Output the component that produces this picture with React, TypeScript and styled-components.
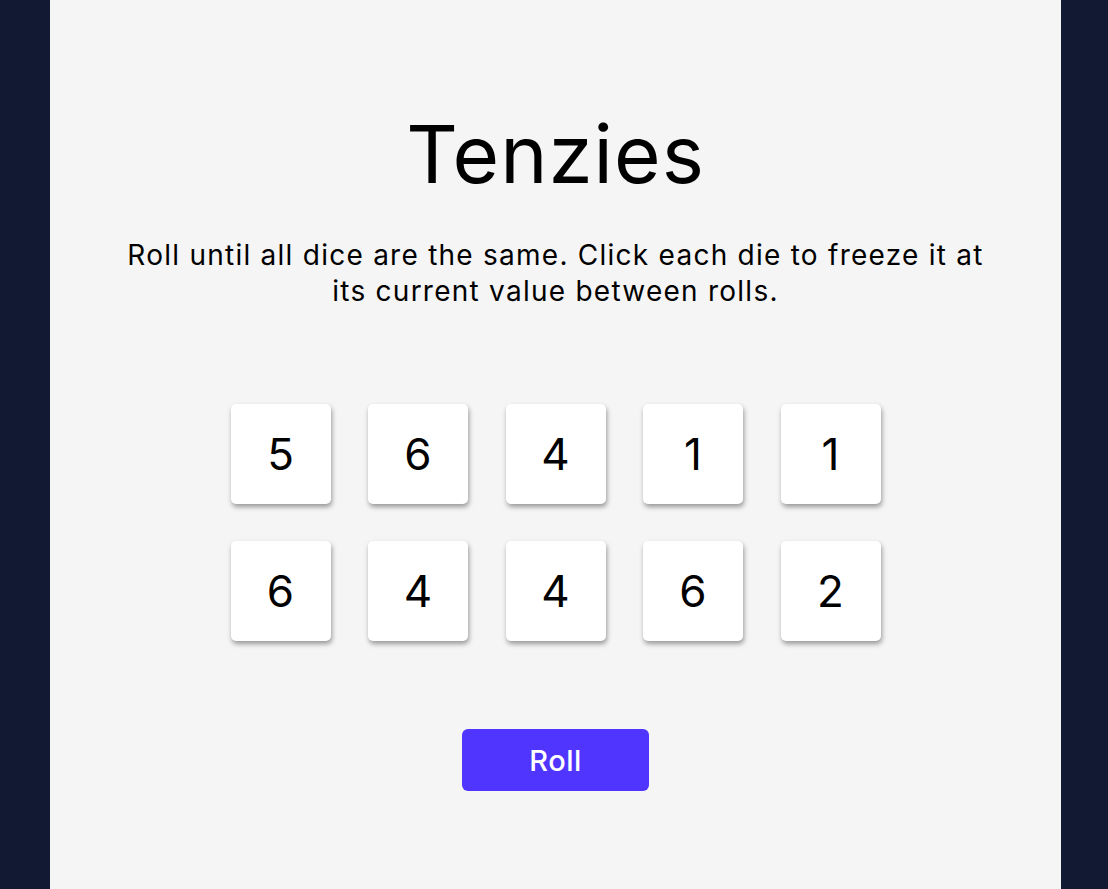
import React from "react";
import styled, { createGlobalStyle } from "styled-components";

const GlobalStyle = createGlobalStyle`
  html, body {
    margin: 0;
    padding: 0;
    background: #121a33;
    font-family: Inter, "Noto Sans", "Liberation Sans", sans-serif;
  }
  #root {
    min-height: 100vh;
  }
`;

const Page = styled.div`
  display: flex;
  min-height: 100vh;
  padding-left: 50px;
  box-sizing: border-box;
`;

const Board = styled.main`
  width: 1011px;
  min-height: 889px;
  background: #f5f5f5;
  display: flex;
  flex-direction: column;
  align-items: center;
  padding-top: 106px;
  box-sizing: border-box;
`;

const Title = styled.h1`
  margin: 0;
  font-size: 80px;
  line-height: 96px;
  font-weight: 400;
  letter-spacing: 1px;
  color: #000;
`;

const Instructions = styled.p`
  margin: 35px 0 0;
  width: 860px;
  text-align: center;
  font-size: 28px;
  line-height: 36px;
  letter-spacing: 1.25px;
  color: #000;
`;

const DiceGrid = styled.div`
  margin-top: 95px;
  display: grid;
  grid-template-columns: repeat(5, 100px);
  grid-auto-rows: 100px;
  column-gap: 37.5px;
  row-gap: 37px;
`;

const Die = styled.button`
  border: none;
  padding: 0;
  background: #fff;
  border-radius: 5px;
  box-shadow: 1px 3px 5px rgba(0, 0, 0, 0.38);
  display: flex;
  align-items: center;
  justify-content: center;
  font-family: inherit;
  font-size: 44px;
  font-weight: 400;
  color: #000;
  cursor: pointer;
`;

const RollButton = styled.button`
  margin-top: 88px;
  width: 187px;
  height: 62px;
  border: none;
  border-radius: 6px;
  background: #5035ff;
  color: #fff;
  font-family: inherit;
  font-size: 29px;
  font-weight: 500;
  letter-spacing: 0.5px;
  cursor: pointer;
`;

const dice = [5, 6, 4, 1, 1, 6, 4, 4, 6, 2];

export default function App() {
  return (
    <>
      <GlobalStyle />
      <Page>
        <Board>
          <Title>Tenzies</Title>
          <Instructions>
            Roll until all dice are the same. Click each die to freeze it at its
            current value between rolls.
          </Instructions>
          <DiceGrid>
            {dice.map((v, i) => (
              <Die key={i}>{v}</Die>
            ))}
          </DiceGrid>
          <RollButton>Roll</RollButton>
        </Board>
      </Page>
    </>
  );
}
